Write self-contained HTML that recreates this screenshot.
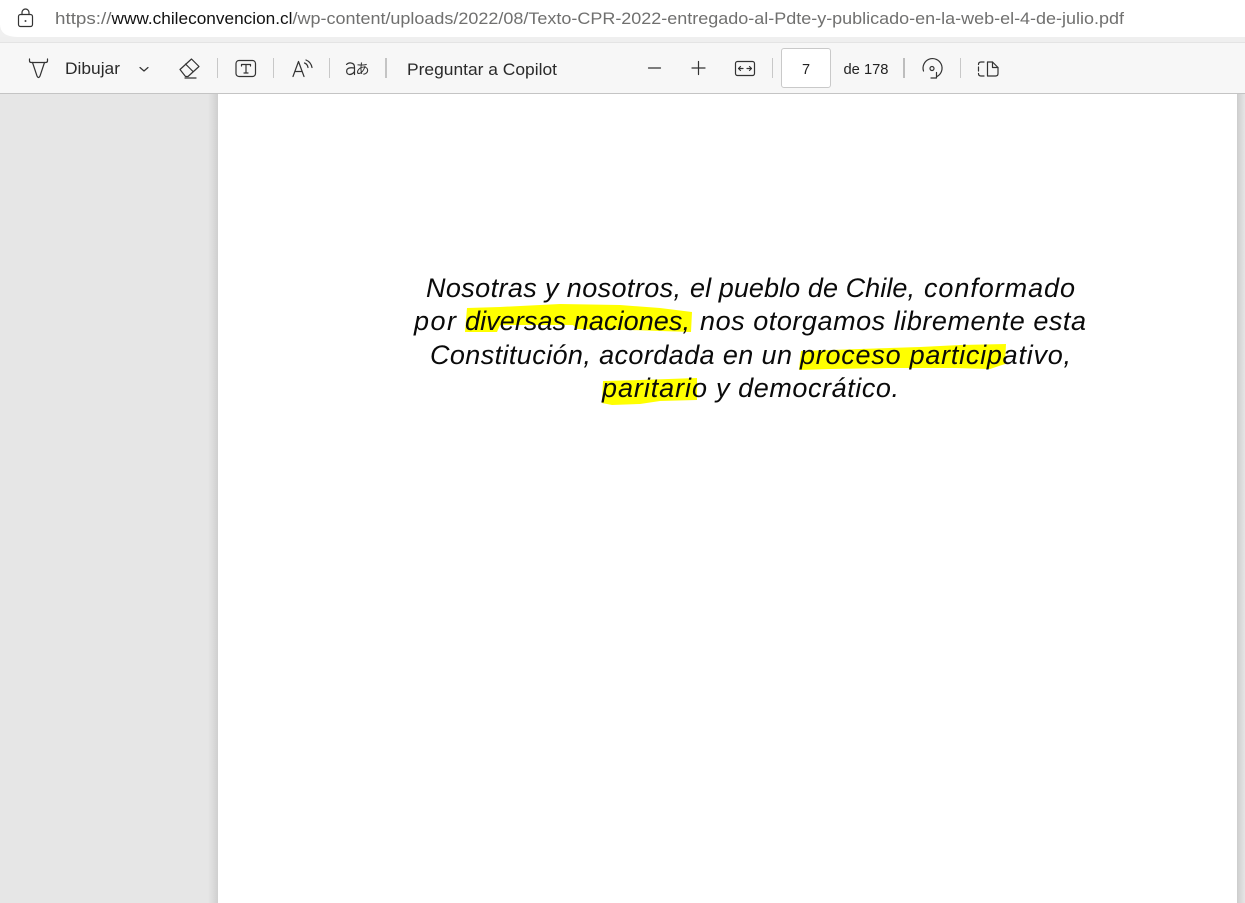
<!DOCTYPE html>
<html lang="es">
<head>
<meta charset="utf-8">
<title>Texto CPR 2022</title>
<style>
html,body{margin:0;padding:0;width:1245px;height:903px;overflow:hidden;background:#fff}
svg{display:block;position:absolute;left:0;top:0}
text{font-family:"Liberation Sans","Noto Sans CJK JP",sans-serif}
.u{font-size:17px;fill:#70706f}
.h{font-size:17px;fill:#111}
.t{font-size:17px;fill:#2a2a2a}
.d{font-size:27px;font-style:italic;fill:#0a0a0a}
.i{fill:none;stroke:#333;stroke-width:1.2;stroke-linecap:round;stroke-linejoin:round}
</style>
</head>
<body>
<svg width="1245" height="903" viewBox="0 0 1245 903" xmlns="http://www.w3.org/2000/svg">
<defs>
<linearGradient id="ls" x1="0" x2="1" y1="0" y2="0"><stop offset="0" stop-color="#e6e6e6"/><stop offset="1" stop-color="#cfcfcf"/></linearGradient>
<linearGradient id="rs" x1="0" x2="1" y1="0" y2="0"><stop offset="0" stop-color="#cdcdcd"/><stop offset="1" stop-color="#e6e6e6"/></linearGradient>
</defs>

<!-- browser chrome -->
<rect width="1245" height="44" fill="#f0f0f0"/>
<path d="M0 0H1245V37H18Q0 37 0 24Z" fill="#fff"/>
<rect y="37" width="1245" height="6" fill="#efefef"/>
<rect y="42" width="1245" height="1" fill="#e4e4e4"/>

<!-- toolbar -->
<rect y="43" width="1245" height="50" fill="#f7f7f7"/>
<rect y="93" width="1245" height="1" fill="#c4c4c4"/>

<!-- content -->
<rect y="94" width="218" height="809" fill="#e6e6e6"/>
<rect x="208" y="94" width="10" height="809" fill="url(#ls)"/>
<rect x="218" y="94" width="1019" height="809" fill="#fff"/>
<rect x="1237" y="94" width="8" height="809" fill="url(#rs)"/>

<!-- lock icon -->
<g class="i" stroke="#555">
<rect x="18.5" y="14.5" width="14" height="12" rx="2"/>
<path d="M22 14.5V12.5a3.5 3.5 0 0 1 7 0V14.5"/>
</g>
<circle cx="25.5" cy="21" r="1" fill="#444"/>

<!-- url -->
<text class="u" x="55" y="24" textLength="56.5" lengthAdjust="spacingAndGlyphs">https://</text>
<text class="h" x="111.5" y="24" textLength="181" lengthAdjust="spacingAndGlyphs">www.chileconvencion.cl</text>
<text class="u" x="292.5" y="24" textLength="831.5" lengthAdjust="spacingAndGlyphs">/wp-content/uploads/2022/08/Texto-CPR-2022-entregado-al-Pdte-y-publicado-en-la-web-el-4-de-julio.pdf</text>

<!-- draw icon -->
<g class="i">
<path d="M29.5 59V61Q29.5 62.5 31.5 62.5H45.5Q47.5 62.5 47.5 61V59"/>
<path d="M32.5 62.5L37 76Q38.5 79 40 76L44.5 62.5"/>
</g>
<text class="t" x="65" y="74" textLength="55" lengthAdjust="spacingAndGlyphs">Dibujar</text>
<path class="i" d="M140 67.5L144 71 148 67.5" stroke="#777"/>

<!-- eraser -->
<g class="i">
<path d="M180 69.5L191.5 59 199 66.5 188 76.5H185.5Z"/>
<path d="M185.5 64L193 71.5"/>
<path d="M185 78H196"/>
</g>
<rect x="217" y="58" width="1" height="20" fill="#c8c8c8"/>

<!-- text box -->
<g class="i">
<rect x="236" y="60.5" width="19.5" height="16" rx="3"/>
<path d="M241.5 66V64.5H250.5V66M246 64.5V73M244 73H248"/>
</g>
<rect x="273" y="58" width="1" height="20" fill="#c8c8c8"/>

<!-- read aloud -->
<g class="i">
<path d="M293 76.5L298.5 61.5 304 76.5M295 71.5H302"/>
<path d="M304.5 63Q307.5 64 308 67.5M306 60Q311 62 312 67.5"/>
</g>
<rect x="329" y="58" width="1" height="20" fill="#c8c8c8"/>

<!-- translate -->
<path class="i" d="M346.5 64.5Q348.5 62.5 351 63Q354.5 63.5 354.5 67V74.5M354.5 68Q348 67 346.8 70Q346 74 349.5 74.5Q352.5 74.5 354.5 71.5"/>
<text x="355.5" y="74" font-size="14" fill="#333" style="font-family:'Noto Sans CJK JP',sans-serif">あ</text>
<rect x="385" y="58" width="2" height="20" fill="#c4c4c4"/>

<text class="t" x="407" y="75" textLength="150" lengthAdjust="spacingAndGlyphs">Preguntar a Copilot</text>

<!-- zoom controls -->
<path class="i" d="M648.5 68H660.5"/>
<path class="i" d="M692 68H705M698.5 61.5V74.5"/>
<g class="i">
<rect x="735.5" y="61.5" width="19" height="14" rx="2"/>
<path d="M738.5 68.5H743M740.5 66.5L738.5 68.5 740.5 70.5M751.5 68.5H747M749.5 66.5L751.5 68.5 749.5 70.5"/>
</g>
<rect x="772" y="58" width="1" height="20" fill="#c8c8c8"/>

<!-- page input -->
<rect x="781.5" y="48.5" width="49" height="39" rx="2.5" fill="#fff" stroke="#c9c9c9"/>
<text x="806" y="74" text-anchor="middle" font-size="14.5" fill="#222">7</text>
<text x="843.5" y="74" font-size="14.5" fill="#222" textLength="45" lengthAdjust="spacingAndGlyphs">de 178</text>
<rect x="903" y="58" width="2" height="20" fill="#bdbdbd"/>

<!-- rotate -->
<g class="i">
<path d="M923.5 71A9.5 9.5 0 1 1 937 76.5"/>
<path d="M936.5 72.5V78H931"/>
</g>
<circle cx="932" cy="68.5" r="2" fill="none" stroke="#333" stroke-width="1.2"/>
<rect x="960" y="58" width="1" height="20" fill="#c8c8c8"/>

<!-- two page -->
<g class="i">
<path d="M984 62H981Q978.5 62 978.5 64.5"/>
<path d="M978.5 67V71"/>
<path d="M978.5 73.5Q978.5 76 981 76H984"/>
<path d="M987.5 62H992.5L998 67.5V73.5Q998 76 995.5 76H987.5Z"/>
<path d="M992.5 62V67.5H998"/>
</g>

<!-- highlights -->
<g fill="#ffff00">
<path d="M467 308L500 307 560 304 620 305 660 308 692 312 691 332 660 331 630 330 577 329 573 325 530 325 500 325 497 332 465 332Z"/>
<path d="M801 351L860 349 920 347 960 345 1006 344 1005 364 990 369 955 368 890 368 830 369 799 370Z"/>
<path d="M603 381L640 380 697 378 697 400 660 401 640 404 612 405 602 403Z"/>
</g>

<!-- document text -->
<text class="d" x="426" y="297" textLength="255" lengthAdjust="spacing">Nosotras y nosotros,</text>
<text class="d" x="690" y="297" textLength="225" lengthAdjust="spacing">el pueblo de Chile,</text>
<text class="d" x="924" y="297" textLength="151" lengthAdjust="spacing">conformado</text>
<text class="d" x="414" y="330" textLength="42" lengthAdjust="spacing">por</text>
<text class="d" x="465" y="330" textLength="225" lengthAdjust="spacing">diversas naciones,</text>
<text class="d" x="700" y="330" textLength="386" lengthAdjust="spacing">nos otorgamos libremente esta</text>
<text class="d" x="430" y="364" textLength="362" lengthAdjust="spacing">Constitución, acordada en un</text>
<text class="d" x="800" y="364" textLength="271" lengthAdjust="spacing">proceso participativo,</text>
<text class="d" x="602" y="397" textLength="105" lengthAdjust="spacing">paritario</text>
<text class="d" x="716" y="397" textLength="183" lengthAdjust="spacing">y democrático.</text>
</svg>
</body>
</html>
